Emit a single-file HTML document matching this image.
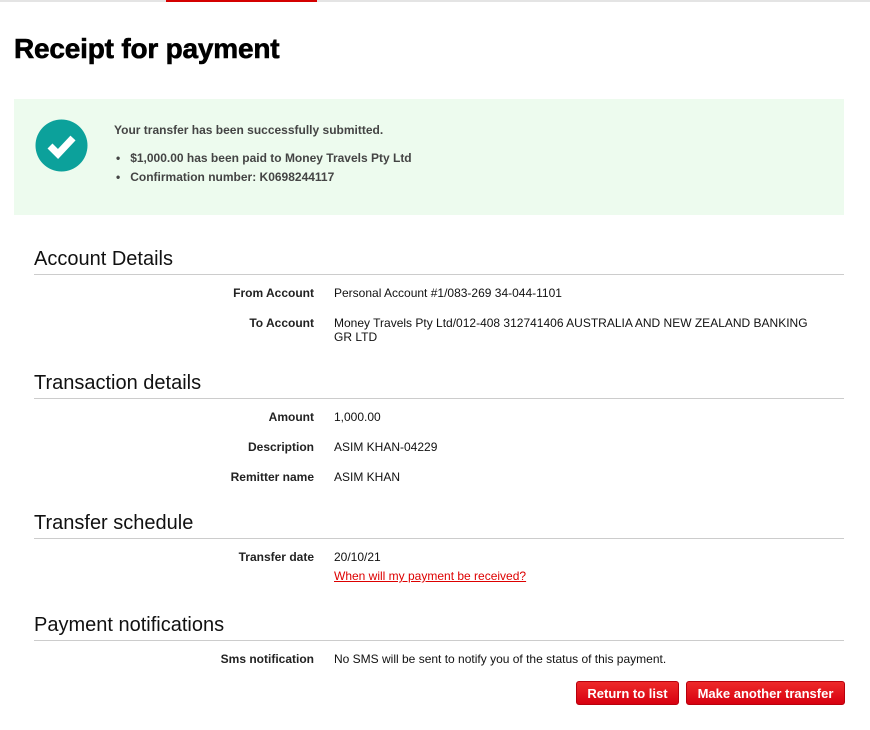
<!DOCTYPE html><html><head><style>
body{margin:0;width:870px;height:730px;position:relative;background:#fff;font-family:"Liberation Sans",Arial,sans-serif;overflow:hidden}
.a{position:absolute}
.h{position:absolute;left:34px;width:810px;font-size:20px;color:#111;border-bottom:1px solid #ccc;height:28px;line-height:26px}
.l{position:absolute;right:556px;font-size:12px;font-weight:bold;color:#222;line-height:14px}
.v{position:absolute;left:334px;font-size:12px;color:#111;line-height:14px;width:490px}
.b{position:absolute;top:681px;height:24px;background:linear-gradient(#ee2a2a,#d80010);border:1px solid #b8000c;border-radius:3px;color:#fff;font-weight:bold;font-size:13px;text-align:center;line-height:24px;box-sizing:border-box}
</style></head><body>
<div class="a" style="left:0;top:0;width:870px;height:2px;background:#e4e4e4"></div>
<div class="a" style="left:166px;top:0;width:151px;height:2px;background:#d40000"></div>
<div class="a" style="left:14px;top:33px;font-size:28px;font-weight:bold;color:#000;letter-spacing:-0.2px;-webkit-text-stroke:0.6px #000">Receipt for payment</div>
<div class="a" style="left:14px;top:99px;width:830px;height:116px;background:#edfbee"></div>
<svg class="a" style="left:35px;top:119px" width="53" height="53" viewBox="0 0 53 53"><circle cx="26.5" cy="26.5" r="26" fill="#0ca19b"/><path d="M15 27l8 8 15-16" fill="none" stroke="#fff" stroke-width="7"/></svg>
<div class="a" style="left:114px;top:123px;font-size:12px;font-weight:bold;color:#444">Your transfer has been successfully submitted.</div>
<div class="a" style="left:116px;top:149px;font-size:12px;font-weight:bold;color:#444;line-height:19px">•&nbsp;&nbsp;&nbsp;$1,000.00 has been paid to Money Travels Pty Ltd<br>•&nbsp;&nbsp;&nbsp;Confirmation number: K0698244117</div>
<div class="h" style="top:246px">Account Details</div>
<div class="l" style="top:286px">From Account</div><div class="v" style="top:286px">Personal Account #1/083-269 34-044-1101</div>
<div class="l" style="top:316px">To Account</div><div class="v" style="top:316px">Money Travels Pty Ltd/012-408 312741406 AUSTRALIA AND NEW ZEALAND BANKING GR LTD</div>
<div class="h" style="top:370px">Transaction details</div>
<div class="l" style="top:410px">Amount</div><div class="v" style="top:410px">1,000.00</div>
<div class="l" style="top:440px">Description</div><div class="v" style="top:440px">ASIM KHAN-04229</div>
<div class="l" style="top:470px">Remitter name</div><div class="v" style="top:470px">ASIM KHAN</div>
<div class="h" style="top:510px">Transfer schedule</div>
<div class="l" style="top:550px">Transfer date</div><div class="v" style="top:550px">20/10/21</div>
<div class="v" style="top:569px;color:#d00;text-decoration:underline">When will my payment be received?</div>
<div class="h" style="top:612px">Payment notifications</div>
<div class="l" style="top:652px">Sms notification</div><div class="v" style="top:652px">No SMS will be sent to notify you of the status of this payment.</div>
<div class="b" style="left:576px;width:103px">Return to list</div>
<div class="b" style="left:686px;width:159px">Make another transfer</div>
</body></html>
